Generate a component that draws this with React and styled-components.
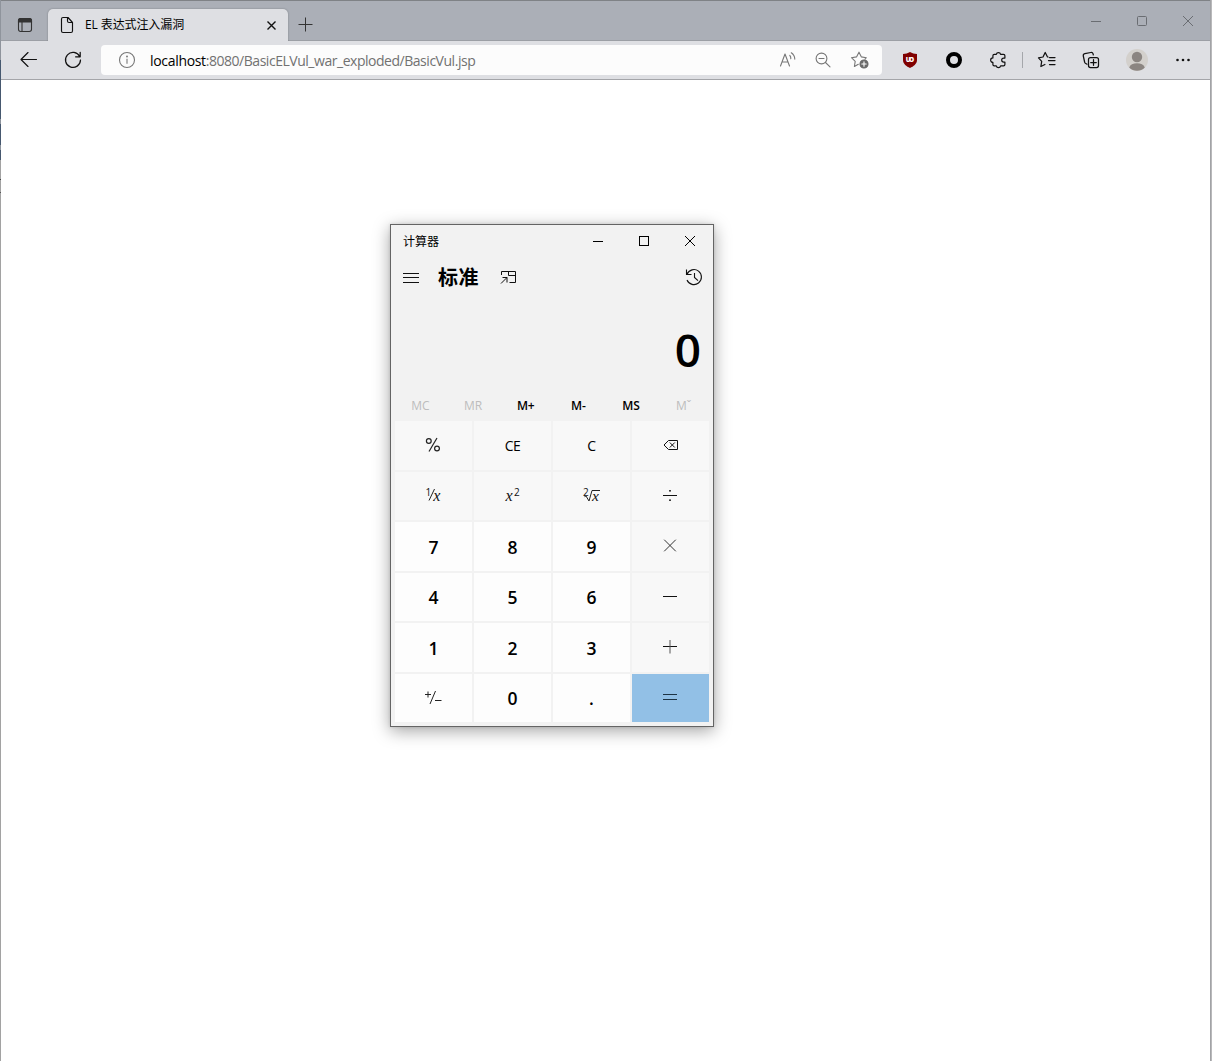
import React from "react";
import styled, { createGlobalStyle, css } from "styled-components";

const ui = `"Open Sans", "Noto Sans", "Noto Sans CJK SC", sans-serif`;

const Global = createGlobalStyle`
  * { box-sizing: border-box; }
  body { margin: 0; overflow: hidden; background: #fff; font-family: ${ui}; color: #000; }
  button { font-family: inherit; color: inherit; border: 0; padding: 0; margin: 0; background: none; }
`;

/* ---------- browser ---------- */
const Browser = styled.div`
  width: 100vw;
  height: 100vh;
  display: grid;
  grid-template-columns: 1px 1fr 2px;
  overflow: hidden;
`;
const LeftEdge = styled.div`
  background: linear-gradient(#8f949c 0 60px, #46586f 60px 119px, #8c929b 119px 124px, #46586f 124px 145px, #8c929b 145px 150px, #46586f 150px 160px, #a2a2a2 160px 179px, #444 179px 180px, #a2a2a2 180px 192px, #555 192px 193px, #a2a2a2 193px);
`;
const RightEdge = styled.div`
  background: linear-gradient(to right, #a2a3a6 0 1px, #b9b9bb 1px);
`;
const Frame = styled.div`
  display: flex;
  flex-direction: column;
  min-width: 0;
`;
const TitleBar = styled.div`
  height: 41px;
  display: flex;
  align-items: flex-end;
  background: #abafb7;
  border-top: 1px solid #7f8286;
  box-shadow: inset 0 -1px #9c9fa5;
`;
const TabMenu = styled.button`
  width: 47px;
  height: 32px;
  display: flex;
  align-items: center;
  justify-content: center;
  padding-left: 1px;
`;
const Tab = styled.div`
  width: 240px;
  height: 32px;
  display: flex;
  align-items: center;
  padding: 0 7px 0 7px;
  background: #dedfe3;
  border-radius: 5px 5px 0 0;
  box-shadow: 0 0 2px rgba(0, 0, 0, 0.3);
  clip-path: inset(-3px -3px 0 -3px);
`;
const TabTitle = styled.span`
  flex: 1;
  margin-left: 6px;
  font-size: 12px;
  line-height: 20px;
  letter-spacing: -0.1px;
  white-space: nowrap;
`;
const NewTab = styled.button`
  width: 35px;
  height: 32px;
  display: flex;
  align-items: center;
  justify-content: center;
`;
const WindowControls = styled.div`
  margin-left: auto;
  margin-right: -1px;
  height: 40px;
  display: flex;
`;
const WindowControl = styled.button`
  width: 46px;
  height: ${(p) => p.$h || 40}px;
  display: flex;
  align-items: center;
  justify-content: center;
`;
const Toolbar = styled.div`
  height: 39px;
  display: flex;
  align-items: center;
  background: #dedfe3;
  border-bottom: 1px solid #a4a5a9;
  padding-left: 6px;
`;
const ToolButton = styled.button`
  width: ${(p) => p.$w || 44}px;
  height: 38px;
  flex: none;
  display: flex;
  align-items: center;
  justify-content: center;
`;
const AddressBar = styled.div`
  width: 781px;
  height: 30px;
  margin: 0 6px;
  display: flex;
  align-items: center;
  padding: 0 4px 0 14px;
  background: #fcfcfc;
  border-radius: 4px;
`;
const Url = styled.span`
  flex: 1;
  margin-left: 11px;
  padding-top: 1px;
  font-size: 14px;
  line-height: 28px;
  letter-spacing: -0.47px;
  color: #717171;
  white-space: nowrap;
  b { font-weight: 400; color: #000; letter-spacing: -0.32px; }
`;
const Divider = styled.span`
  width: 1px;
  height: 16px;
  margin: 0 2px;
  background: #a5a7ab;
`;
const Page = styled.main`
  flex: 1;
  background: #fff;
`;

/* ---------- calculator window ---------- */
const Calculator = styled.section`
  position: absolute;
  left: 390px;
  top: 224px;
  width: 324px;
  height: 503px;
  display: flex;
  flex-direction: column;
  background: #f2f2f2;
  border: 1px solid #646464;
  box-shadow: 0 4px 16px rgba(0, 0, 0, 0.36), 0 0 3px rgba(0, 0, 0, 0.12);
`;
const CalcTitle = styled.header`
  height: 32px;
  display: flex;
  align-items: center;
  padding-left: 12px;
  font-size: 12px;
`;
const ModeBar = styled.div`
  height: 40px;
  display: flex;
  align-items: center;
  padding: 0 7px 0 8px;
`;
const Mode = styled.h1`
  margin: 1px 19px 0 15px;
  font-size: 20px;
  line-height: 29px;
  font-weight: 700;
  letter-spacing: 0.5px;
  white-space: nowrap;
`;
const Spacer = styled.span`
  flex: 1;
`;
const Display = styled.output`
  height: 93px;
  display: flex;
  align-items: center;
  justify-content: flex-end;
  padding: 10px 12px 0 0;
  font-size: 46px;
  font-weight: 600;
  line-height: 60px;
`;
const MemoryRow = styled.div`
  height: 31px;
  display: grid;
  grid-template-columns: repeat(6, 1fr);
  padding: 0 3px 0 3px;
`;
const MemoryKey = styled.button`
  font-size: 12px;
  line-height: 31px;
  font-weight: 600;
  letter-spacing: -0.2px;
  ${(p) => p.$off && css`color: #bdbdbd; font-weight: 500;`}
`;
const Keypad = styled.div`
  height: 301px;
  display: grid;
  grid-template-columns: repeat(4, 77px);
  grid-template-rows: repeat(6, 1fr);
  gap: 2px;
  padding-left: 4px;
`;
const tones = { fn: "#f8f8f8", num: "#fdfdfd", eq: "#92c0e6" };
const Key = styled.button`
  display: flex;
  align-items: center;
  justify-content: center;
  background: ${(p) => tones[p.$tone]};
  font-size: ${(p) => (p.$tone === "num" ? 17.5 : 14)}px;
  letter-spacing: ${(p) => (p.$tone === "num" ? 0 : -0.5)}px;
  font-weight: ${(p) => (p.$tone === "num" ? 600 : 400)};
  line-height: 24px;
  padding: ${(p) => (p.$glyph ? "0 1px 1px 0" : "1px 0 0 0")};
`;

/* ---------- drawings ---------- */
const Svg = styled.svg`
  flex: none;
  display: block;
  overflow: visible;
  fill: none;
  stroke: ${(p) => p.$c || "#111"};
  stroke-width: ${(p) => p.$sw || 1};
  stroke-linecap: ${(p) => (p.$round ? "round" : "butt")};
  stroke-linejoin: ${(p) => (p.$round ? "round" : "miter")};
`;
const Glyph = styled.text`
  stroke: none;
  fill: ${(p) => p.$c || "#111"};
  font-family: ${(p) => (p.$serif ? `"Liberation Serif", serif` : ui)};
  font-style: ${(p) => (p.$serif ? "italic" : "normal")};
  font-size: ${(p) => p.$s}px;
  font-weight: ${(p) => p.$b || 400};
`;

function Icon({ s = 24, children, ...rest }) {
  return (
    <Svg width={s} height={s} viewBox={`0 0 ${s} ${s}`} {...rest}>
      {children}
    </Svg>
  );
}

const icons = {
  tabMenu: (
    <Icon $c="#333" $sw={1.1}>
      <rect x="5.5" y="5.5" width="13" height="13" rx="2.2" />
      <path d="M5.5 9V7.5a2 2 0 0 1 2-2h9a2 2 0 0 1 2 2V9z" fill="#333" />
      <path d="M9 9v9.5" />
    </Icon>
  ),
  doc: (
    <Icon $sw={1.15} $round>
      <path d="M8 4.5h5l4.500 5v8.500a1.500 1.500 0 0 1-1.500 1.500H8a1.500 1.500 0 0 1-1.500-1.500V6A1.500 1.500 0 0 1 8 4.500zM12.500 4.700V8a1.500 1.500 0 0 0 1.500 1.500h3.300" />
    </Icon>
  ),
  tabClose: <Icon s={20} $sw={1.4}><path d="M6.500 6.500l8 8M14.500 6.500l-8 8" /></Icon>,
  plus: <Icon s={20} $c="#333"><path d="M2.500 9.500h14M9.500 2.500v14" /></Icon>,
  back: <Icon $sw={1.15} $round><path d="M19.500 11.500H4.500M11 4.500l-7 7 7 7" /></Icon>,
  refresh: <Icon $sw={1.25} $round><path d="M18.700 8.500A7.500 7.500 0 1 0 19.500 12M19.200 4.300v4.500h-4.600" /></Icon>,
  info: (
    <Icon $c="#777" $sw={1.1}>
      <circle cx="12" cy="12" r="7.500" />
      <path d="M12 10.700v5" />
      <circle cx="12" cy="8.500" r=".4" fill="#777" />
    </Icon>
  ),
  read: (
    <Icon $c="#777" $sw={1.1} $round>
      <path d="M4.500 18L9 6l4.500 12M6 14h6" />
      <path d="M13.800 7.300a4.500 4.500 0 0 1 1 3.400M15.300 4.800a8 8 0 0 1 3.500 6.300" />
    </Icon>
  ),
  zoomOut: (
    <Icon $c="#777" $sw={1.1} $round>
      <circle cx="10.500" cy="10.500" r="5.400" />
      <path d="M14.500 14.500l4.500 4.300M8 10.500h5" />
    </Icon>
  ),
  starAdd: (
    <Icon $c="#777" $sw={1.1} $round>
      <path d="M10.300 16.300L6.400 18.500l.8-5.200-3.700-3.600 5-.8L11 4.200l2.400 4.700 4.900.8-1.300 1.500" />
      <circle cx="16" cy="16" r="4" fill="#696969" stroke="#696969" />
      <path d="M13.800 16h4.400M16 13.800v4.400" stroke="#fff" />
    </Icon>
  ),
  shield: (
    <Icon>
      <path d="M12 4c2 1.300 4.500 2 7 2v6c0 4-3.500 6.400-7 8-3.500-1.600-7-4-7-8V6c2.500 0 5-.7 7-2z" fill="#800000" stroke="none" />
      <Glyph x="12" y="13.800" textAnchor="middle" $s={6.5} $b={800} $c="#fff" textLength="8.5">UO</Glyph>
    </Icon>
  ),
  ring: <Icon $c="#000" $sw={4}><circle cx="12" cy="12" r="6" /></Icon>,
  puzzle: (
    <Icon $sw={1.2} $round>
      <path d="M8.300 6.300h2a2.200 2.200 0 0 1 4.300 0h2.900a1.400 1.400 0 0 1 1.400 1.400v2.400h-1.200a2 2 0 0 0 0 4h1.200v2.400a1.400 1.400 0 0 1-1.400 1.400h-2.900a2.200 2.200 0 0 1-4.300 0h-2a1.400 1.400 0 0 1-1.400-1.400v-2.100a2.200 2.200 0 0 1 0-4.500V7.700a1.400 1.400 0 0 1 1.400-1.400z" />
    </Icon>
  ),
  favorites: (
    <Icon $sw={1.25} $round>
      <path d="M13 9l-.6-.2L10.200 4.500 8 9l-4.500.8 3.200 3.500-.8 5.200 4-2M14.500 9.500H20M13.500 12.500H20M14.500 16.500H20" />
    </Icon>
  ),
  collections: (
    <Icon $sw={1.25} $round>
      <rect x="9.500" y="9.500" width="10" height="10" rx="2" />
      <path d="M14.500 11.700v5.600M11.700 14.500h5.600M8 16.200l-1.600-.9a2 2 0 0 1-.8-1.300L4.300 8a2 2 0 0 1 1.500-2.300l6-1.200a2 2 0 0 1 2.300 1.400l.2 1" />
    </Icon>
  ),
  profile: (
    <Icon>
      <circle cx="12" cy="12" r="11" fill="#d3d0cc" stroke="none" />
      <circle cx="12" cy="9" r="5.200" fill="#8b8581" stroke="none" />
      <path d="M4.200 19.500c1-3 4-4.300 7.800-4.300s6.800 1.300 7.800 4.300a11 11 0 0 1-15.600 0z" fill="#8b8581" stroke="none" />
    </Icon>
  ),
  dots: (
    <Icon>
      {[6.5, 12, 17.5].map((x) => <circle key={x} cx={x} cy="12" r="1.300" fill="#111" stroke="none" />)}
    </Icon>
  ),
  min: (c) => <Icon s={12} $c={c}><path d="M1 6.500h10" /></Icon>,
  max: (c, r) => <Icon s={12} $c={c}><rect x="1.500" y="1.500" width="9" height="9" rx={r} /></Icon>,
  close: (c) => <Icon s={12} $c={c}><path d="M1 1l10 10M11 1L1 11" /></Icon>,
  menu: <Icon><path d="M4 8.500h16M4 12.500h16M4 17.500h16" /></Icon>,
  pin: (
    <Icon s={20}>
      <path d="M3.500 8V4.500h14v11h-6M10.500 4.500v4h7M3 16.500l6-6M4.500 10.500h4.500v5" />
    </Icon>
  ),
  history: (
    <Icon $sw={1.1}>
      <path d="M5 9.200A7.500 7.500 0 1 1 5 15M4.500 4.500v5h5M12.500 8v4.500l3.500 3.200" />
    </Icon>
  ),
  percent: (
    <Icon $c="#222" $sw={1.2}>
      <circle cx="7.800" cy="8" r="2.400" /><circle cx="16" cy="15.500" r="2.400" /><path d="M16 5L8 18.500" />
    </Icon>
  ),
  backspace: (
    <Icon><path d="M10.500 7.500h9v9h-9L6 12zM11.800 9.500l5 5M16.800 9.500l-5 5" /></Icon>
  ),
  reciprocal: (
    <Icon $c="#222">
      <Glyph x="4.500" y="12.500" $s={10}>1</Glyph>
      <path d="M13.500 6L8 17.500" />
      <Glyph x="12.200" y="17.500" $s={16} $serif>x</Glyph>
    </Icon>
  ),
  square: (
    <Icon>
      <Glyph x="5.500" y="18" $s={16} $serif>x</Glyph>
      <Glyph x="14" y="13" $s={10}>2</Glyph>
    </Icon>
  ),
  root: (
    <Icon $c="#222">
      <Glyph x="4" y="13" $s={10}>2</Glyph>
      <path d="M5.500 13.700l1.500-.7 3 5L13 7.500h8" />
      <Glyph x="13" y="18" $s={15.5} $serif>x</Glyph>
    </Icon>
  ),
  divide: (
    <Icon>
      <path d="M5 12.500h14" />
      <rect x="11.200" y="7" width="1.600" height="1.600" fill="#111" stroke="none" />
      <rect x="11.200" y="16.400" width="1.600" height="1.600" fill="#111" stroke="none" />
    </Icon>
  ),
  times: <Icon $c="#333"><path d="M6.200 5.700l11.600 11.600M17.800 5.700L6.200 17.300" /></Icon>,
  minus: <Icon><path d="M5 12.500h14" /></Icon>,
  add: <Icon><path d="M5 11.500h14" /><path d="M12 5v13.500" stroke="#555" /></Icon>,
  sign: (
    <Icon $c="#222"><path d="M4 9.500h6M7 6.500v6M14.500 6l-5.500 13M14 15.500h6.500" /></Icon>
  ),
  equals: <Icon $c="#1d3344" $sw={1.2}><path d="M5 9.500h14M5 14.500h14" /></Icon>,
};

const keys = [
  ["fn", "percent"], ["fn", null, "CE"], ["fn", null, "C"], ["fn", "backspace"],
  ["fn", "reciprocal"], ["fn", "square"], ["fn", "root"], ["fn", "divide"],
  ["num", null, "7"], ["num", null, "8"], ["num", null, "9"], ["fn", "times"],
  ["num", null, "4"], ["num", null, "5"], ["num", null, "6"], ["fn", "minus"],
  ["num", null, "1"], ["num", null, "2"], ["num", null, "3"], ["fn", "add"],
  ["num", "sign"], ["num", null, "0"], ["num", null, "."], ["eq", "equals"],
];
const memory = [["MC", true], ["MR", true], ["M+"], ["M-"], ["MS"], ["Mˇ", true]];

export default function App() {
  return (
    <>
      <Global />
      <Browser>
        <LeftEdge />
        <Frame>
          <TitleBar>
            <TabMenu>{icons.tabMenu}</TabMenu>
            <Tab>
              {icons.doc}
              <TabTitle>EL 表达式注入漏洞</TabTitle>
              {icons.tabClose}
            </Tab>
            <NewTab>{icons.plus}</NewTab>
            <WindowControls>
              <WindowControl>{icons.min("#6a6d72")}</WindowControl>
              <WindowControl>{icons.max("#6a6d72", 1)}</WindowControl>
              <WindowControl>{icons.close("#6a6d72")}</WindowControl>
            </WindowControls>
          </TitleBar>
          <Toolbar>
            <ToolButton>{icons.back}</ToolButton>
            <ToolButton>{icons.refresh}</ToolButton>
            <AddressBar>
              {icons.info}
              <Url><b>localhost</b>:8080/BasicELVul_war_exploded/BasicVul.jsp</Url>
              <ToolButton $w={35}>{icons.read}</ToolButton>
              <ToolButton $w={36}>{icons.zoomOut}</ToolButton>
              <ToolButton $w={37}>{icons.starAdd}</ToolButton>
            </AddressBar>
            <ToolButton>{icons.shield}</ToolButton>
            <ToolButton>{icons.ring}</ToolButton>
            <ToolButton>{icons.puzzle}</ToolButton>
            <Divider />
            <ToolButton>{icons.favorites}</ToolButton>
            <ToolButton>{icons.collections}</ToolButton>
            <ToolButton $w={47}>{icons.profile}</ToolButton>
            <ToolButton $w={46}>{icons.dots}</ToolButton>
          </Toolbar>
          <Page />
        </Frame>
        <RightEdge />
      </Browser>
      <Calculator>
        <CalcTitle>
          计算器
          <Spacer />
          <WindowControl $h={32}>{icons.min("#000")}</WindowControl>
          <WindowControl $h={32}>{icons.max("#000", 0)}</WindowControl>
          <WindowControl $h={32}>{icons.close("#000")}</WindowControl>
        </CalcTitle>
        <ModeBar>
          {icons.menu}
          <Mode>标准</Mode>
          {icons.pin}
          <Spacer />
          {icons.history}
        </ModeBar>
        <Display>0</Display>
        <MemoryRow>
          {memory.map(([label, off]) => <MemoryKey key={label} $off={off}>{label}</MemoryKey>)}
        </MemoryRow>
        <Keypad>
          {keys.map(([tone, icon, label]) => (
            <Key key={icon || label} $tone={tone} $glyph={!!icon}>{icon ? icons[icon] : label}</Key>
          ))}
        </Keypad>
      </Calculator>
    </>
  );
}
